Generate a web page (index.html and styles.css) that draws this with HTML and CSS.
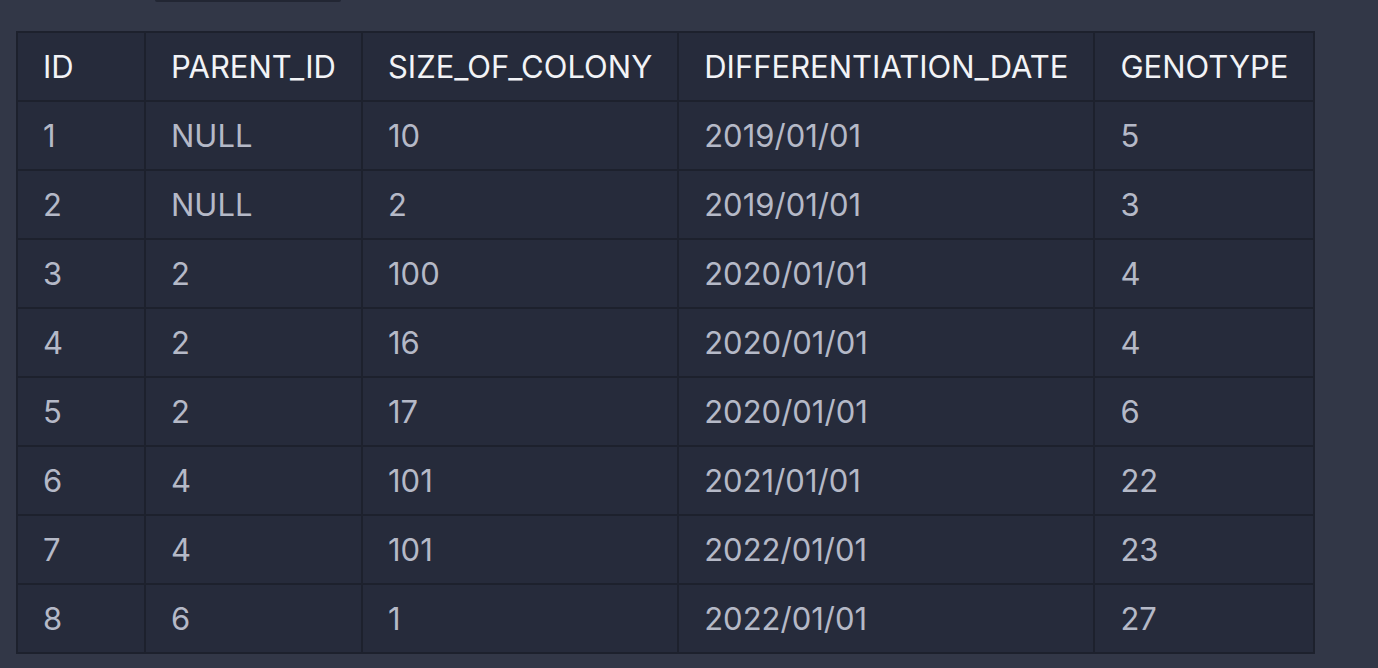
FILE: index.html
```html
<!DOCTYPE html>
<html>
<head>
<meta charset="utf-8">
<link rel="stylesheet" href="styles.css">
</head>
<body>
<div class="topbar"><div class="tab-edge"></div></div>
<div class="wrap">
<table class="grid">
<thead>
<tr><th class="col-id">ID</th><th>PARENT_ID</th><th>SIZE_OF_COLONY</th><th>DIFFERENTIATION_DATE</th><th>GENOTYPE</th></tr>
</thead>
<tbody>
<tr><td>1</td><td>NULL</td><td>10</td><td>2019/01/01</td><td>5</td></tr>
<tr><td>2</td><td>NULL</td><td>2</td><td>2019/01/01</td><td>3</td></tr>
<tr><td>3</td><td>2</td><td>100</td><td>2020/01/01</td><td>4</td></tr>
<tr><td>4</td><td>2</td><td>16</td><td>2020/01/01</td><td>4</td></tr>
<tr><td>5</td><td>2</td><td>17</td><td>2020/01/01</td><td>6</td></tr>
<tr><td>6</td><td>4</td><td>101</td><td>2021/01/01</td><td>22</td></tr>
<tr><td>7</td><td>4</td><td>101</td><td>2022/01/01</td><td>23</td></tr>
<tr><td>8</td><td>6</td><td>1</td><td>2022/01/01</td><td>27</td></tr>
</tbody>
</table>
</div>
</body>
</html>
```
FILE: styles.css
```css
html, body {
  margin: 0;
  padding: 0;
  background: #323747;
  height: 100%;
  overflow: hidden;
}
body {
  font-family: Inter, "Noto Sans", sans-serif;
}
.topbar {
  height: 31px;
  padding-left: 155px;
}
.tab-edge {
  width: 186px;
  height: 2px;
  background: #222633;
  border-radius: 0 0 3px 3px;
}
.wrap {
  padding-left: 16px;
}
.grid {
  border-collapse: collapse;
  background: #262b3b;
  border: 2px solid #1d212d;
}
.grid th, .grid td {
  border: 2px solid #1d212d;
  height: 67px;
  padding: 0 25px;
  text-align: left;
  vertical-align: middle;
  font-size: 31px;
  font-weight: 400;
  white-space: nowrap;
}
.grid th.col-id {
  width: 76px;
  box-sizing: content-box;
}
.grid th {
  color: #f2f3f6;
}
.grid td {
  color: #b5b9c7;
}
```
